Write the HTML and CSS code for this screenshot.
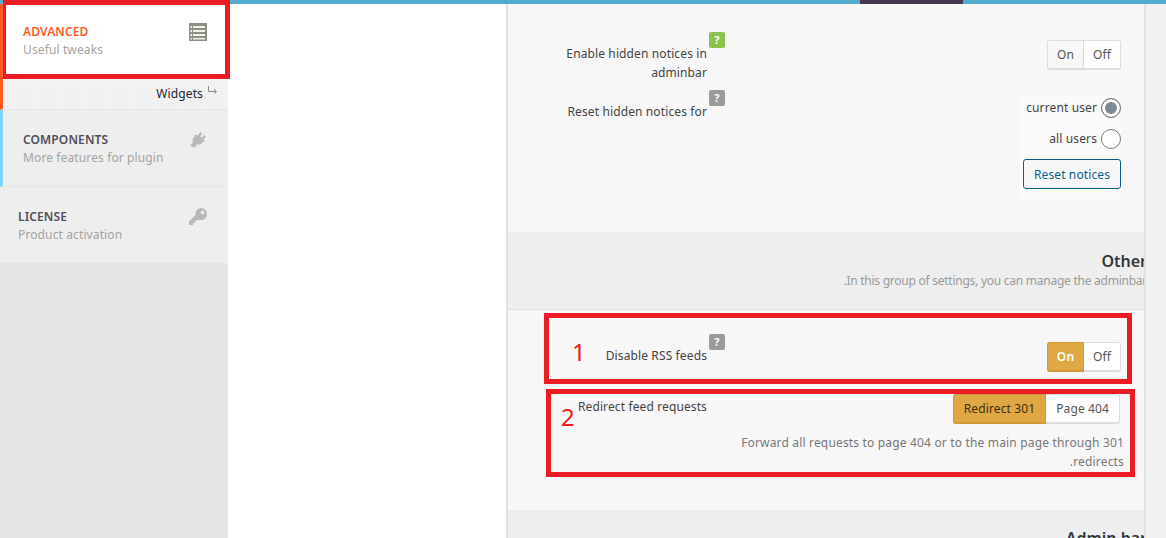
FILE: index.html
```html
<!DOCTYPE html>
<html lang="en">

<head>
    <meta charset="UTF-8">
    <meta name="viewport" content="width=device-width, initial-scale=1.0">
    <title>Plugin settings</title>
    <link rel="stylesheet" href="styles.css">
</head>

<body>
    <div class="topbar"><span></span><span class="topbar-dark"></span><span></span></div>

    <div class="layout">
        <!-- Sidebar -->
        <nav class="sidebar">
            <div class="nav-item nav-active">
                <div>
                    <strong>ADVANCED</strong>
                    <span>Useful tweaks</span>
                </div>
                <svg class="nav-icon" viewBox="0 0 18 18">
                    <path fill="#8f8f86" d="M0 0h18v18H0z" />
                    <path fill="#f1f1ec" d="M4 3h12v2H4zM4 7h12v2H4zM4 11h12v2H4zM4 15h12v1.500H4zM1.500 3H3v2H1.500zM1.500 7H3v2H1.500zM1.500 11H3v2H1.500zM1.500 15H3v1.500H1.500z" />
                </svg>
            </div>
            <div class="nav-sub">
                <span>Widgets</span>
                <svg class="sub-arrow" viewBox="0 0 11 9">
                    <path fill="none" stroke="#8a8a8a" d="M1.500 0v5.500H9M7 3.200l2.500 2.300L7 7.800" />
                </svg>
            </div>
            <div class="nav-item nav-blue">
                <div>
                    <strong>COMPONENTS</strong>
                    <span>More features for plugin</span>
                </div>
                <svg class="nav-icon" viewBox="0 0 18 18">
                    <path fill="#b9b9b9" d="M11.500 1l1.800 1.400-2.300 3 1.800 1.400 2.400-2.900 1.800 1.400-2.500 3.100 1.300 1.100-1.200 1.500-.9-.3c-1.100 2.400-3.300 3.400-5.500 2.700l-2.800 3.400L1 14.800l2.900-3.400C3 9.500 3.500 7.300 5.600 5.800l-.5-.9 1.300-1.500 1.900 1.300z" />
                </svg>
            </div>
            <div class="nav-item nav-plain">
                <div>
                    <strong>LICENSE</strong>
                    <span>Product activation</span>
                </div>
                <svg class="nav-icon" viewBox="0 0 18 18">
                    <path fill="#b9b9b9" fill-rule="evenodd" d="M12 0a6 6 0 1 1-2.600 11.400L8 12.800H6v2H4V17H0v-3.600l6.500-6.300A6 6 0 0 1 12 0zm1.500 2.800a1.800 1.800 0 1 0 0 3.600 1.800 1.800 0 0 0 0-3.600z" />
                </svg>
            </div>
        </nav>

        <div class="gap-column"></div>

        <!-- Settings panel -->
        <main class="panel">
            <div class="row row-notices">
                <label class="row-label">Enable hidden notices in adminbar</label>
                <span class="help help-green">?</span>
                <div class="toggle">
                    <span class="toggle-btn toggle-short toggle-pressed">On</span>
                    <span class="toggle-btn toggle-short">Off</span>
                </div>
            </div>

            <div class="row row-reset">
                <label class="row-label">Reset hidden notices for</label>
                <span class="help">?</span>
                <div class="reset-box">
                    <div class="radio-line">current user <span class="radio radio-on"></span></div>
                    <div class="radio-line">all users <span class="radio"></span></div>
                    <button class="btn-outline" type="button">Reset notices</button>
                </div>
            </div>

            <div class="group-head">
                <h3>Other</h3>
                <p dir="rtl">In this group of settings, you can manage the adminbar.</p>
            </div>

            <div class="row row-rss">
                <label class="row-label">Disable RSS feeds</label>
                <span class="help">?</span>
                <div class="toggle">
                    <span class="toggle-btn toggle-short toggle-on">On</span>
                    <span class="toggle-btn toggle-short">Off</span>
                </div>
            </div>

            <div class="row row-redirect">
                <label class="row-label">Redirect feed requests</label>
                <div class="redirect-box">
                    <div class="toggle">
                        <span class="toggle-btn toggle-on toggle-dark">Redirect 301</span>
                        <span class="toggle-btn">Page 404</span>
                    </div>
                    <p class="row-desc" dir="rtl">Forward all requests to page 404 or to the main page through 301 redirects.</p>
                </div>
            </div>

            <div class="group-head group-next">
                <h3>Admin bar</h3>
            </div>
        </main>

        <div class="right-strip"></div>
    </div>

    <!-- Annotations drawn over the screenshot -->
    <div class="mark mark-nav"></div>
    <div class="mark mark-one"></div>
    <div class="mark mark-two"></div>
    <span class="mark-num num-one">1</span>
    <span class="mark-num num-two">2</span>
</body>

</html>
```

FILE: styles.css
```css
body {
    margin: 0;
    height: 538px;
    overflow: hidden;
    position: relative;
    background: #fff;
    font-family: "Noto Sans", "Open Sans", sans-serif;
    font-size: 12px;
    letter-spacing: 0.12px;
    color: #444;
}

.topbar {
    display: grid;
    grid-template-columns: 860px 103px 1fr;
    height: 4px;
    background: #52accc;
}

.topbar-dark {
    background: #46384f;
}

.layout {
    display: flex;
    height: 534px;
}

/* Sidebar */
.sidebar {
    width: 228px;
    flex-shrink: 0;
    background: #e5e5e5;
}

.nav-item {
    display: flex;
    justify-content: space-between;
    box-sizing: border-box;
    height: 77px;
    padding: 21px 21px 0 20px;
    background: #eee;
    border-bottom: 1px solid #e5e5e5;
}

.nav-item strong {
    display: block;
    font-size: 12px;
    font-weight: 600;
    line-height: 18px;
    color: #50505a;
}

.nav-item span {
    display: block;
    font-size: 12px;
    line-height: 18px;
    color: #a3a3a3;
}

.nav-icon {
    width: 18px;
    height: 18px;
}

.nav-active {
    height: 74px;
    padding-top: 19px;
    background: #fff;
    border-left: 3px solid #ff5a25;
    border-bottom: none;
}

.nav-active strong {
    color: #ff5a25;
}

.nav-sub {
    display: flex;
    justify-content: flex-end;
    align-items: center;
    gap: 4px;
    box-sizing: border-box;
    height: 32px;
    padding: 0 10px 0 0;
    background: #f2f2f2 radial-gradient(#ededed 1px, transparent 1px) 0 0 / 3px 3px;
    border-left: 3px solid #ff5a25;
    border-bottom: 1px solid #e5e5e5;
    color: #23282d;
}

.sub-arrow {
    width: 11px;
    height: 9px;
    margin-bottom: 6px;
}

.nav-blue {
    border-left: 3px solid #7fd4ff;
}

.nav-plain {
    padding-left: 18px;
    padding-right: 21px;
}

.gap-column {
    width: 278px;
    flex-shrink: 0;
}

/* Settings panel */
.panel {
    width: 636px;
    flex-shrink: 0;
    overflow: hidden;
    background: #f7f7f7;
    border-left: 2px solid #e1e1e1;
    border-right: 2px solid #e1e1e1;
}

.right-strip {
    flex: 1;
    background: #f1f1f1;
}

.row {
    display: flex;
    box-sizing: border-box;
    padding-right: 23px;
}

.row-label {
    width: 199px;
    flex-shrink: 0;
    box-sizing: border-box;
    text-align: right;
    line-height: 19px;
    color: #444;
}

.help {
    width: 16px;
    height: 16px;
    margin-left: 2px;
    border-radius: 2px;
    background: #9b9b9b;
    color: #fff;
    font-size: 11px;
    font-weight: 700;
    line-height: 16px;
    text-align: center;
}

.help-green {
    background: #8bc34a;
}

.toggle {
    display: flex;
    height: 30px;
    margin-left: auto;
    box-sizing: border-box;
    border: 1px solid #ddd;
    border-bottom-width: 2px;
    border-radius: 3px;
    background: #fff;
}

.toggle-btn {
    padding: 0 10px;
    line-height: 28px;
    color: #555;
}

.toggle-short {
    width: 36px;
    padding: 0;
    box-sizing: border-box;
    text-align: center;
}

.toggle-pressed {
    background: #f7f7f7;
    border-right: 1px solid #ddd;
}

.toggle-on {
    margin: -1px 0 -2px -1px;
    line-height: 28px;
    background: #e0a845;
    color: #fff;
    font-weight: 600;
    border-radius: 3px 0 0 3px;
    border: 1px solid #d29a36;
    border-bottom-width: 2px;
    box-sizing: border-box;
}

.toggle-on.toggle-short {
    width: 37px;
}

.toggle-dark {
    color: #3f2d10;
    font-weight: 400;
}

.row-notices {
    height: 86px;
    padding-top: 28px;
}

.row-notices .toggle {
    margin-top: 8px;
}

.row-notices .row-label {
    padding-top: 12px;
    padding-left: 50px;
}

.row-reset {
    height: 142px;
}

.row-reset .row-label {
    padding-top: 12px;
}

.reset-box {
    margin: 5px 0 0 auto;
    width: 101px;
    height: 104px;
    padding-top: 3px;
    display: flex;
    flex-direction: column;
    align-items: flex-end;
    background: #fafafa;
    box-sizing: border-box;
}

.radio-line {
    display: flex;
    align-items: flex-start;
    gap: 4px;
    height: 20px;
    margin-bottom: 11px;
    line-height: 19px;
}

.radio {
    width: 20px;
    height: 20px;
    box-sizing: border-box;
    border: 1px solid #777;
    border-radius: 50%;
    background: #fff;
}

.radio-on {
    background: #7e8993;
    box-shadow: inset 0 0 0 3px #fff;
}

.btn-outline {
    width: 98px;
    height: 30px;
    margin-top: -1px;
    padding: 0;
    font: inherit;
    letter-spacing: inherit;
    color: #0a6187;
    background: #f7f7f7;
    border: 1px solid #0a6187;
    border-radius: 3px;
}

.group-head {
    box-sizing: border-box;
    height: 78px;
    padding-top: 19px;
    margin-right: -3px;
    text-align: right;
    background: #eee;
    border-bottom: 1px solid #e1e1e1;
}

.group-head h3 {
    margin: 0;
    font-size: 16px;
    line-height: 20px;
    font-weight: 600;
    letter-spacing: 0;
    color: #32373c;
}

.group-head p {
    margin: 0;
    line-height: 20px;
    letter-spacing: -0.25px;
    color: #9a9a9a;
}

.group-next {
    height: 40px;
    padding-top: 18px;
    border-bottom: none;
}

.row-rss {
    height: 84px;
    padding-top: 24px;
}

.row-rss .toggle {
    margin-top: 8px;
}

.row-rss .row-label {
    padding-top: 12px;
}

.row-redirect {
    height: 116px;
    padding-right: 24px;
}

.row-redirect .row-label {
    padding-top: 3px;
}

.redirect-box {
    margin-left: auto;
    width: 400px;
    display: flex;
    flex-direction: column;
    align-items: flex-end;
}

.row-desc {
    width: 385px;
    margin: 9px -4px 0 0;
    line-height: 19px;
    letter-spacing: 0.17px;
    color: #777;
}

/* Annotations */
.mark {
    position: absolute;
    box-sizing: border-box;
    border: 5px solid #ed1c24;
}

.mark-nav {
    left: 3px;
    top: 0;
    width: 227px;
    height: 79px;
    border-left-width: 3px;
}

.mark-one {
    left: 544px;
    top: 313px;
    width: 588px;
    height: 71px;
}

.mark-two {
    left: 546px;
    top: 389px;
    width: 589px;
    height: 88px;
}

.mark-num {
    position: absolute;
    font-size: 24px;
    line-height: 28px;
    letter-spacing: 0;
    color: #ed1c24;
}

.num-one {
    left: 572px;
    top: 338px;
}

.num-two {
    left: 561px;
    top: 403px;
}
```
